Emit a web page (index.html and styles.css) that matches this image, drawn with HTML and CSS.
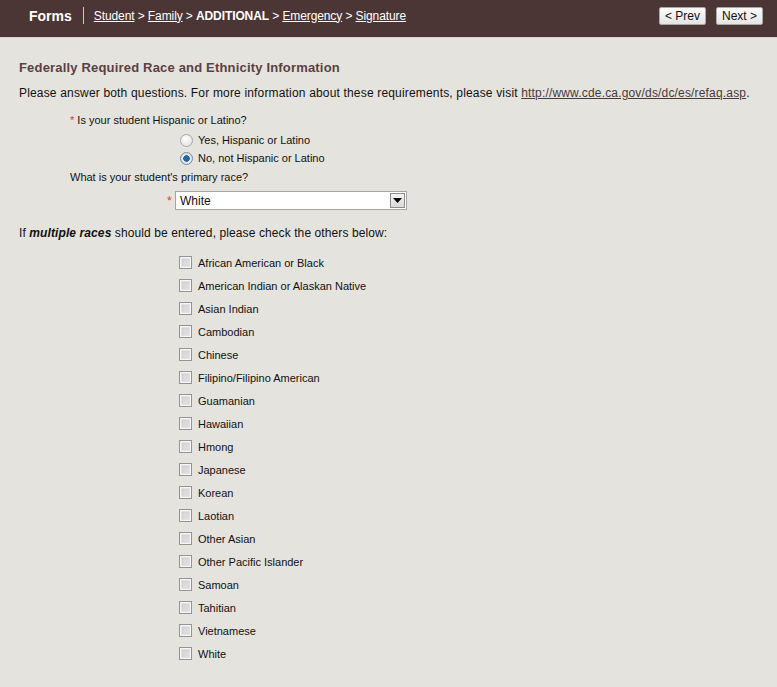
FILE: index.html
```html
<!DOCTYPE html>
<html>
<head>
<meta charset="utf-8">
<link rel="stylesheet" href="styles.css">
</head>
<body>
<header class="topbar">
  <div class="crumbs">
    <span class="brand">Forms</span>
    <span class="sep"></span>
    <nav class="trail">
      <a href="#">Student</a> &gt; <a href="#">Family</a> &gt; <b>ADDITIONAL</b> &gt; <a href="#">Emergency</a> &gt; <a href="#">Signature</a>
    </nav>
  </div>
  <div class="navbtns">
    <button class="btn">&lt; Prev</button>
    <button class="btn">Next &gt;</button>
  </div>
</header>
<main class="content">
  <h1 class="title">Federally Required Race and Ethnicity Information</h1>
  <p class="intro">Please answer both questions. For more information about these requirements, please visit <a href="#">http://www.cde.ca.gov/ds/dc/es/refaq.asp</a>.</p>
  <div class="question"><span class="req">*</span> Is your student Hispanic or Latino?</div>
  <div class="radios">
    <label class="opt"><input type="radio" name="hisp"><span>Yes, Hispanic or Latino</span></label>
    <label class="opt"><input type="radio" name="hisp" checked><span>No, not Hispanic or Latino</span></label>
  </div>
  <div class="question plain">What is your student's primary race?</div>
  <div class="selrow">
    <span class="req">*</span>
    <div class="select"><span class="selval">White</span><span class="selbtn"><svg width="9" height="5" viewBox="0 0 9 5"><path d="M0 0H9L4.5 5Z" fill="#000"/></svg></span></div>
  </div>
  <p class="multi">If <b><i>multiple races</i></b> should be entered, please check the others below:</p>
  <div class="checks">
    <label class="chk"><input type="checkbox"><span>African American or Black</span></label>
    <label class="chk"><input type="checkbox"><span>American Indian or Alaskan Native</span></label>
    <label class="chk"><input type="checkbox"><span>Asian Indian</span></label>
    <label class="chk"><input type="checkbox"><span>Cambodian</span></label>
    <label class="chk"><input type="checkbox"><span>Chinese</span></label>
    <label class="chk"><input type="checkbox"><span>Filipino/Filipino American</span></label>
    <label class="chk"><input type="checkbox"><span>Guamanian</span></label>
    <label class="chk"><input type="checkbox"><span>Hawaiian</span></label>
    <label class="chk"><input type="checkbox"><span>Hmong</span></label>
    <label class="chk"><input type="checkbox"><span>Japanese</span></label>
    <label class="chk"><input type="checkbox"><span>Korean</span></label>
    <label class="chk"><input type="checkbox"><span>Laotian</span></label>
    <label class="chk"><input type="checkbox"><span>Other Asian</span></label>
    <label class="chk"><input type="checkbox"><span>Other Pacific Islander</span></label>
    <label class="chk"><input type="checkbox"><span>Samoan</span></label>
    <label class="chk"><input type="checkbox"><span>Tahitian</span></label>
    <label class="chk"><input type="checkbox"><span>Vietnamese</span></label>
    <label class="chk"><input type="checkbox"><span>White</span></label>
  </div>
</main>
</body>
</html>
```

FILE: styles.css
```css
html, body {
  margin: 0;
  padding: 0;
}
body {
  background: #e5e3de;
  font-family: "Liberation Sans", Arial, sans-serif;
  color: #111;
  width: 777px;
  height: 687px;
  overflow: hidden;
}
.topbar {
  height: 37px;
  background: #4b3635;
  display: flex;
  align-items: center;
  justify-content: space-between;
  border-bottom: 1px solid #d8d5cf;
  box-sizing: content-box;
}
.crumbs {
  display: flex;
  align-items: center;
  padding-left: 29px;
  color: #fff;
  margin-top: -6px;
}
.brand {
  font-weight: bold;
  font-size: 14px;
}
.sep {
  width: 1px;
  height: 17px;
  background: #cfc6c4;
  margin: 0 10px 0 11px;
}
.trail {
  font-size: 12px;
  letter-spacing: -0.1px;
}
.trail a {
  color: #fff;
  text-decoration: underline;
}
.trail b {
  font-weight: bold;
}
.navbtns {
  display: flex;
  gap: 10px;
  padding-right: 14px;
  margin-top: -5px;
}
.btn {
  width: 47px;
  height: 18px;
  padding: 0;
  font-family: "Liberation Sans", Arial, sans-serif;
  font-size: 12px;
  color: #111;
  background: linear-gradient(#fcfcfc, #e4e4e4);
  border: 1px solid #a9a9a9;
  border-radius: 2px;
  line-height: 16px;
}
.content {
  padding-left: 19px;
}
.title {
  margin: 22px 0 0;
  font-size: 13px;
  line-height: 16px;
  font-weight: bold;
  color: #5a4142;
  letter-spacing: 0.18px;
}
.intro {
  margin: 9px 0 0;
  font-size: 12px;
  line-height: 16px;
  letter-spacing: 0.17px;
}
.intro a {
  color: #4a3a3a;
  text-decoration: underline;
}
.question {
  margin: 12px 0 0 51px;
  font-size: 11px;
  line-height: 14px;
}
.question.plain {
  margin-top: 3px;
}
.req {
  color: #e23a2a;
}
.radios {
  margin: 4px 0 0 161px;
}
.opt {
  display: flex;
  align-items: center;
  height: 18px;
  font-size: 11px;
}
.opt input {
  appearance: none;
  -webkit-appearance: none;
  width: 13px;
  height: 13px;
  margin: 0 5px 0 0;
  border-radius: 50%;
  border: 1px solid #a8a8a8;
  background: radial-gradient(circle at 40% 35%, #ffffff, #dcdcdc);
  box-sizing: border-box;
  position: relative;
}
.opt input:checked {
  border-color: #7a8a99;
  background: radial-gradient(circle, #1f6aa5 0 2.5px, #2f5f8a 3px, #e8ecef 3.5px, #cfd5da);
}
.selrow {
  display: flex;
  align-items: center;
  margin: 7px 0 0 148px;
  height: 19px;
  font-size: 12px;
}
.selrow .req {
  width: 8px;
}
.select {
  width: 232px;
  height: 19px;
  box-sizing: border-box;
  border: 1px solid #a5a5a5;
  background: #fff;
  display: flex;
  align-items: center;
  justify-content: space-between;
}
.selval {
  padding-left: 4px;
  font-size: 12px;
  color: #111;
}
.selbtn {
  width: 15px;
  height: 15px;
  margin-right: 1px;
  box-sizing: border-box;
  border: 1px solid #8c8c8c;
  background: linear-gradient(#f4f4f4, #d9d9d9);
  display: flex;
  align-items: center;
  justify-content: center;
}
.multi {
  margin: 15px 0 0;
  font-size: 12px;
  line-height: 16px;
  letter-spacing: 0.1px;
}
.checks {
  margin: 10px 0 0 160px;
}
.chk {
  display: flex;
  align-items: center;
  height: 23px;
  font-size: 11px;
}
.chk input {
  appearance: none;
  -webkit-appearance: none;
  width: 13px;
  height: 13px;
  margin: 0 6px 0 0;
  box-sizing: border-box;
  border: 1px solid #939393;
  background: #dcdcdc;
  box-shadow: inset 0 0 0 1px #f6f6f6, inset 0 0 0 2px #e2e2e2, inset 2px 2px 3px #c9c9c9;
}
```
